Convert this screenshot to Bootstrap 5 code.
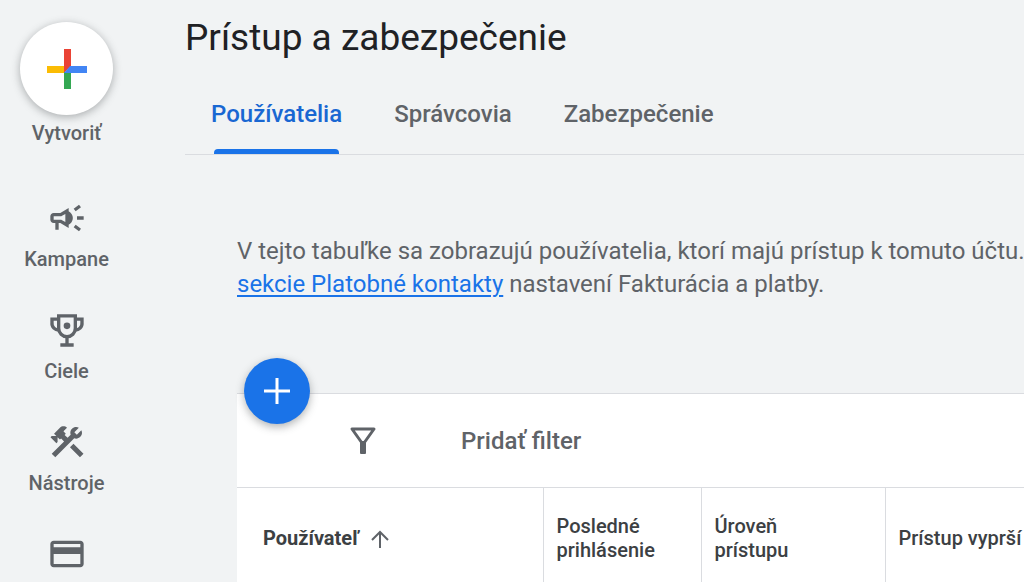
<!DOCTYPE html>
<html lang="sk">
<head>
<meta charset="utf-8">
<meta name="viewport" content="width=device-width, initial-scale=1">
<title>Prístup a zabezpečenie</title>
<link href="https://cdn.jsdelivr.net/npm/bootstrap@5.3.0/dist/css/bootstrap.min.css" rel="stylesheet">
<style>
  body { font-family: Roboto, "Liberation Sans", sans-serif; background: #f1f3f4; color: #5f6368; }
  .app-shell { min-height: 100vh; overflow: hidden; }
  .side-menu { width: 133px; padding-top: 22px; font-size: 20px; line-height: 26px; font-weight: 500; }
  .side-menu svg { width: 40px; height: 40px; fill: #5f6368; }
  .side-menu a, .side-menu button { color: #5f6368; }
  .side-menu button { font-weight: 500; margin-bottom: 52px; line-height: 26px; }
  .side-items { gap: 38px; }
  .create-disc { width: 93px; height: 93px; background: #fff; box-shadow: 0 2px 8px rgba(60,64,67,.4); margin-bottom: 5px; }
  .page-main { min-width: 0; padding-left: 52px; }
  .page-title { font-size: 37px; line-height: 44px; color: #202124; padding-top: 16px; }
  .page-tabs { border-bottom: 1px solid #dadce0; margin-top: 20px; }
  .page-tabs .nav-link { padding: 18px 26px 24px; font-size: 24px; line-height: 32px; font-weight: 500; color: #5f6368; position: relative; }
  .page-tabs .nav-link.active { color: #1967d2; }
  .page-tabs .nav-link.active::after { content: ""; position: absolute; left: 29px; right: 29px; bottom: 0; height: 5px; background: #1a73e8; border-radius: 4px 4px 0 0; }
  .page-body { padding-left: 52px; }
  .intro { margin-top: 80px; font-size: 24px; line-height: 33px; }
  .intro a { color: #1a73e8; text-underline-offset: 3px; text-decoration-thickness: 2px; }
  .users-panel { background: #fff; border-top: 1px solid #dadce0; margin-top: 92px; }
  .add-fab { left: 7px; top: -36px; width: 66px; height: 66px; background: #1a73e8; box-shadow: 0 3px 8px rgba(60,64,67,.4); }
  .filter-bar { height: 94px; padding-left: 106px; gap: 78px; border-bottom: 1px solid #dadce0; }
  .filter-input { font-size: 24px; font-weight: 500; color: #5f6368; outline: 0; }
  .filter-input::placeholder { color: #5f6368; opacity: 1; }
  .users-table { table-layout: fixed; }
  .users-table th { height: 100px; padding: 0 13px; font-size: 20px; line-height: 24px; font-weight: 500; color: #3c4043; vertical-align: middle; }
  .users-table th + th { border-left: 1px solid #dadce0; }
  .users-table th:first-child { font-weight: 700; padding-left: 26px; }
  .col-user { width: 306px; } .col-login { width: 158px; } .col-level { width: 184px; }
</style>
</head>
<body>
<div class="app-shell d-flex">
  <nav class="side-menu flex-shrink-0 d-flex flex-column align-items-center" aria-label="Hlavná ponuka">
    <button type="button" class="border-0 bg-transparent p-0 d-flex flex-column align-items-center">
      <span class="create-disc rounded-circle d-flex align-items-center justify-content-center">
        <svg viewBox="0 0 40 40" aria-hidden="true"><path fill="#ea4335" d="M17 0h7v17l-7 7z"/><path fill="#fbbc04" d="M0 17h17v7H0z"/><path fill="#34a853" d="M17 23h7v17h-7z"/><path fill="#4285f4" d="M23 17h17v7H17z"/></svg>
      </span>
      Vytvoriť
    </button>
    <div class="side-items d-flex flex-column">
      <a href="#" class="text-decoration-none d-flex flex-column align-items-center gap-2">
        <svg viewBox="0 0 24 24" aria-hidden="true"><path d="M18 11v2h4v-2zM16 17.61l3.2 2.39 1.2-1.6-3.2-2.4zM20.4 5.6L19.2 4 16 6.4 17.2 8zM4 9c-1.1 0-2 .9-2 2v2c0 1.1.9 2 2 2h1v4h2v-4h1l5 3V6L8 9H4zm5.03 1.71L11 9.53v4.94l-1.97-1.18-.48-.29H4v-2h4.55l.48-.29zM15.500 12c0-1.33-.58-2.53-1.500-3.350L13 8v8l1-.66c.92-.81 1.500-2.010 1.500-3.340z"/></svg>
        Kampane
      </a>
      <a href="#" class="text-decoration-none d-flex flex-column align-items-center gap-2">
        <svg viewBox="0 0 24 24" aria-hidden="true"><g fill="none" stroke="#5f6368" stroke-width="2"><path d="M7 3.500h10v7.500a5 5 0 0 1-10 0z"/><path d="M7 5.500H3v2a4 4 0 0 0 4.500 4.500M17 5.500h4v2a4 4 0 0 1-4.500 4.500M12 16v5M8 21h8"/></g><circle cx="12" cy="9.500" r="2"/></svg>
        Ciele
      </a>
      <a href="#" class="text-decoration-none d-flex flex-column align-items-center gap-2">
        <svg viewBox="0 0 24 24" aria-hidden="true"><path d="M13.78 15.17l2.12-2.12 6 6-2.12 2.12zM17.5 10c1.93 0 3.5-1.57 3.5-3.5 0-.58-.16-1.12-.41-1.6l-2.7 2.7-1.49-1.49 2.7-2.7c-.48-.25-1.02-.41-1.6-.41C15.57 3 14 4.570 14 6.500c0 .41.08.8.21 1.16l-1.85 1.85-1.78-1.78.71-.71-1.410-1.410L12 3.490c-1.170-1.170-3.070-1.170-4.240 0L4.220 7.030l1.410 1.410H2.810l-.71.71 3.540 3.540.71-.71V9.150l1.410 1.410.71-.71 1.780 1.780-7.410 7.410 2.120 2.120L16.340 9.790c.36.13.75.21 1.160.21z"/></svg>
        Nástroje
      </a>
      <a href="#" class="text-decoration-none d-flex flex-column align-items-center" aria-label="Fakturácia">
        <svg viewBox="0 0 24 24" aria-hidden="true"><path d="M20 4H4c-1.110 0-2 .89-2 2v12c0 1.110.89 2 2 2h16c1.110 0 2-.89 2-2V6c0-1.110-.89-2-2-2zm0 14H4v-6h16v6zm0-10H4V6h16v2z"/></svg>
      </a>
    </div>
  </nav>

  <main class="page-main flex-grow-1 d-flex flex-column">
    <h1 class="page-title m-0 fw-normal">Prístup a zabezpečenie</h1>
    <ul class="page-tabs nav flex-nowrap">
      <li class="nav-item"><a class="nav-link active" aria-current="page" href="#">Používatelia</a></li>
      <li class="nav-item"><a class="nav-link" href="#">Správcovia</a></li>
      <li class="nav-item"><a class="nav-link" href="#">Zabezpečenie</a></li>
    </ul>
    <div class="page-body flex-grow-1 d-flex flex-column">
      <p class="intro mb-0 text-nowrap">V tejto tabuľke sa zobrazujú používatelia, ktorí majú prístup k tomuto účtu.<br><a href="#">sekcie Platobné kontakty</a> nastavení Fakturácia a platby.</p>
      <section class="users-panel position-relative flex-grow-1">
        <button type="button" class="add-fab position-absolute rounded-circle border-0 p-0 d-flex align-items-center justify-content-center" aria-label="Pridať používateľa">
          <svg width="28" height="28" viewBox="0 0 28 28" aria-hidden="true"><path d="M14 1v26M1 14h26" stroke="#fff" stroke-width="3"/></svg>
        </button>
        <div class="filter-bar d-flex align-items-center">
          <svg class="flex-shrink-0" width="40" height="40" viewBox="0 0 40 40" aria-hidden="true"><path d="M9 8h22L21 22h-2z" fill="none" stroke="#5f6368" stroke-width="3" stroke-linejoin="round"/><path d="M17 20h6v12q0 1-1 1h-4q-1 0-1-1z" fill="#5f6368"/></svg>
          <input type="text" class="filter-input border-0 bg-transparent p-0 flex-grow-1" placeholder="Pridať filter" aria-label="Pridať filter">
        </div>
        <table class="users-table w-100">
          <thead>
            <tr>
              <th scope="col" class="col-user"><span class="d-flex align-items-center gap-2">Používateľ
                <svg width="26" height="26" viewBox="0 0 26 26" aria-hidden="true"><path d="M13 23V7M5 15l8-8 8 8" fill="none" stroke="#5f6368" stroke-width="2"/></svg></span></th>
              <th scope="col" class="col-login">Posledné prihlásenie</th>
              <th scope="col" class="col-level">Úroveň<br>prístupu</th>
              <th scope="col" class="text-nowrap">Prístup vyprší</th>
            </tr>
          </thead>
        </table>
      </section>
    </div>
  </main>
</div>
<script src="https://cdn.jsdelivr.net/npm/bootstrap@5.3.0/dist/js/bootstrap.bundle.min.js"></script>
</body>
</html>
